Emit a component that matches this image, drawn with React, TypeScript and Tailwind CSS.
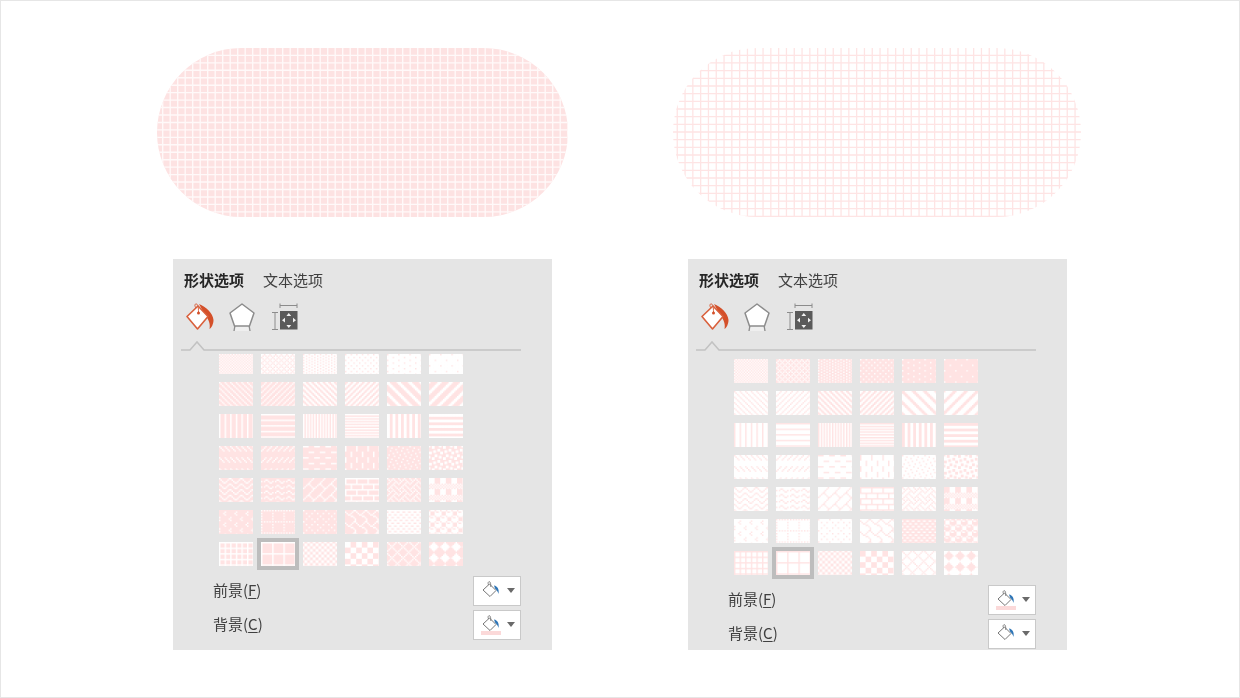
import React from 'react';

const PINK = '#ffe3e3';
const WHITE = '#ffffff';

// PowerPoint pattern fills are 8x8 bitmaps, one hex byte per row
const PATTERNS: string[][] = [
  ['aa55aa55aa55aa55', 'ddaa77aaddaa77aa', '77dd77dd77dd77dd', '77ffddff77ffddff', '7ffff7ff7ffff7ff', '7ffffffff7ffffff'],
  ['8844221188442211', '1122448811224488', 'cc663399cc663399', '3366cc993366cc99', 'c1e070381c0e0783', '83070e1c3870e0c1'],
  ['8888888888888888', 'ff000000ff000000', 'aaaaaaaaaaaaaaaa', 'ff00ff00ff00ff00', 'cccccccccccccccc', 'ffff0000ffff0000'],
  ['8844221100000000', '1122448800000000', 'f00000000f000000', '8080808008080808', '8010022001084004', 'b130031bd8c00c8d'],
  ['8142241881422418', '0018a4030018a403', '0102040818244281', 'ff808080ff080808', '8854224588142251', 'f0f0f0f0aa55aa55'],
  ['0008100800800180', 'aa00800080008000', '8000220008002200', '038448300c020101', 'ff66ff99ff66ff99', '77898f8f7798f8f8'],
  ['ff888888ff888888', 'ff80808080808080', '9966669999666699', 'f0f0f0f00f0f0f0f', '8244281028448201', '10387cfe7c381000'],
];

const bitmapPath = (hex: string) => {
  let d = '';
  for (let y = 0; y < 8; y++) {
    const byte = parseInt(hex.slice(y * 2, y * 2 + 2), 16);
    for (let x = 0; x < 8; x++) {
      if (byte & (0x80 >> x)) d += `M${x} ${y}h1v1h-1z`;
    }
  }
  return d;
};

const gridLines = (w: number, h: number, px: number, py: number, ox: number, oy: number) => {
  let d = '';
  for (let x = ox; x < w; x += px) d += `M${x} 0V${h}`;
  for (let y = oy; y < h; y += py) d += `M0 ${y}H${w}`;
  return d;
};

// the large grid fill, stretched over a rounded pill
const Pill = ({ id, w, fill, line, px, py, ox, oy, strokeW }: { id: string; w: number; fill: string; line: string; px: number; py: number; ox: number; oy: number; strokeW: number }) => (
  <svg width={w} height={169} className="block">
    <defs>
      <clipPath id={id}>
        <rect width={w} height={169} rx={84.5} />
      </clipPath>
    </defs>
    <g clipPath={`url(#${id})`}>
      <rect width={w} height={169} fill={fill} />
      <path d={gridLines(w, 169, px, py, ox, oy)} stroke={line} strokeWidth={strokeW} fill="none" />
    </g>
  </svg>
);

const Swatch = ({ id, hex, fg, bg, height }: { id: string; hex: string; fg: string; bg: string; height: number }) => (
  <svg width={34} height={height} className="block blur-[0.5px]">
    <defs>
      <pattern id={id} width={8} height={8} patternUnits="userSpaceOnUse" patternTransform="scale(1.4)">
        <rect width={8} height={8} fill={bg} />
        <path d={bitmapPath(hex)} fill={fg} />
      </pattern>
    </defs>
    <rect width={34} height={height} fill={`url(#${id})`} />
  </svg>
);

const BucketIcon = () => (
  <svg width={28} height={28} viewBox="0 0 28 28" className="block">
    <path d="M13 1C20 4 27 10 27.5 17C27.5 21 25.5 25 23.5 26C24.5 21 23 17 19 12Z" fill="#d4502a" />
    <path d="M1 13.5L12 3L22 13.5L11.5 26Z" fill="#fff" stroke="#d9603c" strokeWidth={1.6} strokeLinejoin="round" />
    <path d="M10 5C8 2 9 0.8 10.5 1C12 1.2 12.5 5 12.5 9" fill="none" stroke="#d9603c" strokeWidth={1} />
    <circle cx={12.5} cy={10} r={1.5} fill="#d4502a" />
  </svg>
);

const PentagonIcon = () => (
  <svg width={26} height={28} viewBox="0 0 26 28" className="block">
    <path d="M7 23H19L20 28H6Z" fill="#efefef" />
    <path d="M6 22L5 28M20 22L21 28" stroke="#8c8c8c" strokeWidth={1.3} />
    <path d="M13 1L25 10L20.5 23H5.5L1 10Z" fill="#fff" stroke="#8c8c8c" strokeWidth={1.5} strokeLinejoin="round" />
  </svg>
);

const SizeIcon = () => (
  <svg width={26} height={28} viewBox="0 0 26 28" className="block">
    <path d="M8 0.5V5M25 0.5V5M8 2.5H25M0 9.5H6M0 26.5H6M3 9.5V26.5" fill="none" stroke="#8c8c8c" strokeWidth={1} />
    <rect x={8} y={8} width={17.5} height={18.5} fill="#5a5a5a" />
    <path d="M16.8 10L19.2 13H14.4ZM16.8 25L14.4 22H19.2ZM10 17.2L13 14.8V19.6ZM24 17.2L21 19.6V14.8Z" fill="#f2f2f2" />
  </svg>
);

const SmallBucket = ({ bar }: { bar: boolean }) => (
  <svg width={22} height={24} viewBox="0 0 22 24" className="block">
    <path d="M3 10L9.5 4L16 10.5L10 16.5Z" fill="#fff" stroke="#777" strokeWidth={1} strokeLinejoin="round" />
    <path d="M8.5 5C7.5 2.5 8.5 1.5 9.5 1.7C10.5 1.9 10.8 4 10.8 7" fill="none" stroke="#777" strokeWidth={0.9} />
    <path d="M14 5.5C17.5 6 19.5 9.5 18.4 14C17.8 11.5 16.8 10 15 8.5Z" fill="#2e75b6" />
    {bar && <rect x={1} y={17} width={20} height={4} fill="#fbd9d9" />}
  </svg>
);

const ColorButton = ({ bar }: { bar: boolean }) => (
  <div className="flex h-[30px] w-[48px] items-center justify-center gap-[5px] border border-[#c9c9c9] bg-white pt-[2px]">
    <SmallBucket bar={bar} />
    <div className="mb-[3px] h-0 w-0 border-x-[4.5px] border-t-[5px] border-x-transparent border-t-[#6a6a6a]" />
  </div>
);

const Panel = ({
  name,
  fg,
  bg,
  firstRow,
  gridTop,
  foreBar,
}: {
  name: string;
  fg: string;
  bg: string;
  firstRow: number;
  gridTop: string;
  foreBar: boolean;
}) => (
  <div className="ml-[16px] mt-[42px] flex h-[391px] w-[379px] flex-col bg-[#e5e5e5] text-[15px] text-[#404040] blur-[0.35px] [font-family:'Noto_Sans_CJK_SC','Liberation_Sans',sans-serif]">
    <div className="flex h-[44px] items-center gap-[19px] pb-[2px] pl-[11px]">
      <span className="font-bold text-[#262626]">形状选项</span>
      <span>文本选项</span>
    </div>
    <div className="flex items-start pl-[13px]">
      <BucketIcon />
      <div className="ml-[15px]">
        <PentagonIcon />
      </div>
      <div className="ml-[17px]">
        <SizeIcon />
      </div>
    </div>
    <svg width={342} height={12} className="ml-[7px] mt-[9px] block shrink-0">
      <path d="M1 10H10L17 2L24 10H341" fill="none" stroke="#c2c2c2" strokeWidth={1.5} />
    </svg>
    <div className={`ml-[46px] grid w-max grid-cols-[repeat(6,34px)] gap-[8px] ${gridTop}`}>
      {PATTERNS.flatMap((row, r) =>
        row.map((hex, c) => (
          <div key={`${r}-${c}`} className={r === 6 && c === 1 ? 'outline-4 outline-[#bdbdbd]' : ''}>
            <Swatch id={`${name}-${r}-${c}`} hex={hex} fg={fg} bg={bg} height={r === 0 ? firstRow : 24} />
          </div>
        )),
      )}
    </div>
    <div className="mt-[10px] flex flex-col gap-[4px] pl-[40px] pr-[31px]">
      <div className="flex items-center justify-between">
        <span className="pb-[2px]">
          前景(<span className="underline underline-offset-2">F</span>)
        </span>
        <ColorButton bar={foreBar} />
      </div>
      <div className="flex items-center justify-between">
        <span className="pb-[2px]">
          背景(<span className="underline underline-offset-2">C</span>)
        </span>
        <ColorButton bar={!foreBar} />
      </div>
    </div>
  </div>
);

export default function App() {
  return (
    <div className="flex h-[698px] w-[1240px] border border-[#e6e6e6] bg-white pl-[156px] pt-[47px]">
      <div className="w-[516px] shrink-0">
        <Pill id="pill-a" w={411} fill="#fde2e2" line="#fff9f9" px={7.5} py={7.45} ox={5.7} oy={7.4} strokeW={1.4} />
        <Panel name="a" fg={WHITE} bg={PINK} firstRow={20} gridTop="mt-[2px]" foreBar={false} />
      </div>
      <div className="w-[408px] shrink-0">
        <Pill id="pill-b" w={408} fill="#ffffff" line="#fee4e4" px={7.8} py={7.67} ox={4.25} oy={7.3} strokeW={1.3} />
        <div className="-ml-[1px]">
          <Panel name="b" fg={PINK} bg={WHITE} firstRow={24} gridTop="mt-[7px]" foreBar={true} />
        </div>
      </div>
    </div>
  );
}
